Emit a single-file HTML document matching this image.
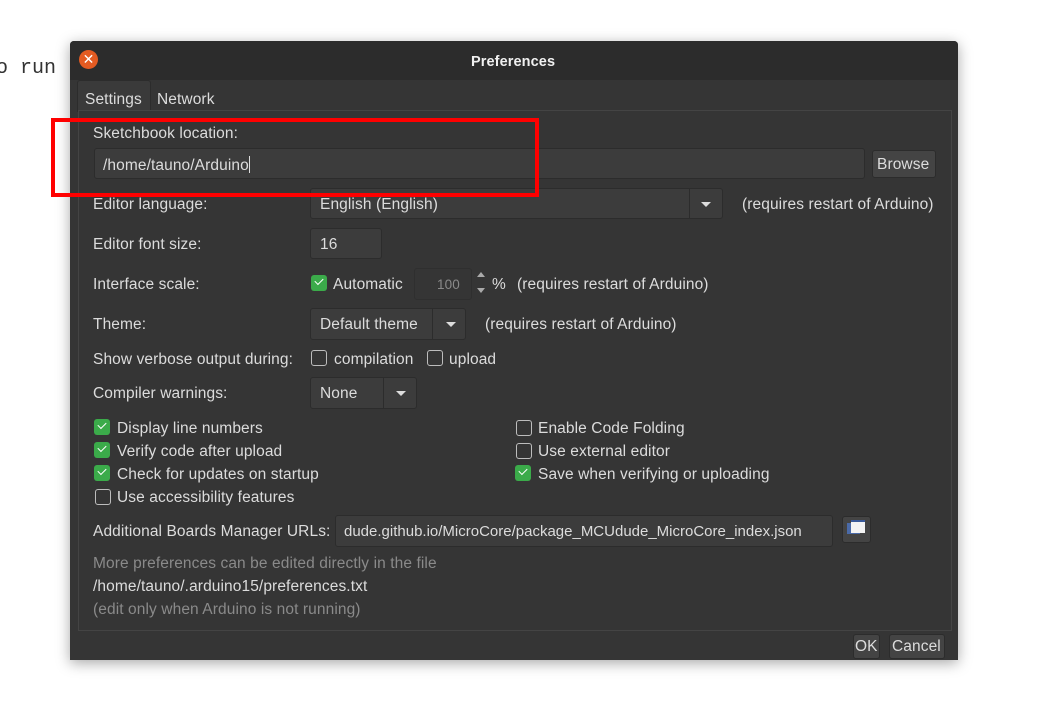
<!DOCTYPE html>
<html><head><style>
body{margin:0;width:1039px;height:714px;background:#fff;position:relative;overflow:hidden;font-family:"Liberation Sans",sans-serif;}
.a{position:absolute;white-space:nowrap;}
.t{position:absolute;white-space:nowrap;font-size:15.5px;color:#dcdcdc;line-height:18px;height:18px;margin-top:2px;letter-spacing:0.1px;}
.dlg{position:absolute;left:70px;top:41px;width:888px;height:619px;background:#353535;box-shadow:0 3px 14px rgba(0,0,0,.35);border-radius:4px 4px 0 0;}
.box{position:absolute;background:#3c3c3c;border:1px solid #2c2c2c;border-radius:3px;}
.cb{position:absolute;width:14px;height:14px;border:1px solid #bdbdbd;border-radius:3px;}
.cbo{position:absolute;width:16px;height:16px;background:#3bab4a;border-radius:3px;}
.cbo:after{content:"";position:absolute;left:4px;top:3px;width:7px;height:4px;border-left:1.6px solid #fff;border-bottom:1.6px solid #fff;transform:rotate(-45deg);}
.arr{position:absolute;width:0;height:0;border-left:5px solid transparent;border-right:5px solid transparent;border-top:5px solid #ddd;}
.dim{color:#8a8a8a;}
</style></head><body>
<div class="a" style="left:-4px;top:57px;font-family:'Liberation Mono',monospace;font-size:20px;color:#333">o  run</div>
<div class="dlg"></div>
<div class="a" style="left:70px;top:41px;width:888px;height:39px;background:#2c2c2c;border-radius:4px 4px 0 0"></div>
<div class="a" style="left:79px;top:50px;width:19px;height:19px;border-radius:50%;background:#e45b22;color:#fff;font-size:14px;line-height:19px;text-align:center">✕</div>
<div class="t" style="left:471px;top:51px;font-weight:bold;color:#f0f0f0;font-size:14.5px">Preferences</div>
<!-- tabs -->
<div class="a" style="left:77px;top:80px;width:72px;height:31px;background:#3a3a3a;border:1px solid #2c2c2c;border-bottom:none;border-radius:3px 3px 0 0"></div>
<div class="t" style="left:85px;top:89px">Settings</div>
<div class="t" style="left:157px;top:89px">Network</div>
<div class="a" style="left:78px;top:110px;width:872px;height:519px;border:1px solid #444;background:#353535"></div>
<div class="t" style="left:93px;top:123px">Sketchbook location:</div>
<div class="box" style="left:94px;top:148px;width:769px;height:29px"></div>
<div class="t" style="left:103px;top:154px">/home/tauno/Arduino<span style="display:inline-block;width:1px;height:17px;background:#ddd;vertical-align:-3px"></span></div>
<div class="box" style="left:872px;top:150px;width:62px;height:26px;background:#444"></div>
<div class="t" style="left:877px;top:154px">Browse</div>

<div class="t" style="left:93px;top:194px">Editor language:</div>
<div class="box" style="left:310px;top:188px;width:411px;height:29px"></div>
<div class="a" style="left:689px;top:189px;width:1px;height:29px;background:#2c2c2c"></div>
<div class="t" style="left:320px;top:194px">English (English)</div>
<div class="arr" style="left:701px;top:202px"></div>
<div class="t" style="left:742px;top:194px">(requires restart of Arduino)</div>

<div class="t" style="left:93px;top:234px">Editor font size:</div>
<div class="box" style="left:310px;top:228px;width:70px;height:29px"></div>
<div class="t" style="left:320px;top:234px">16</div>

<div class="t" style="left:93px;top:274px">Interface scale:</div>
<div class="cbo" style="left:311px;top:275px"></div>
<div class="t" style="left:333px;top:274px">Automatic</div>
<div class="box" style="left:414px;top:268px;width:56px;height:30px;background:#353535;border-color:#2f2f2f"></div>
<div class="t dim" style="left:437px;top:274px;font-size:13.5px">100</div>
<div class="a" style="left:477px;top:272px;width:0;height:0;border-left:4px solid transparent;border-right:4px solid transparent;border-bottom:5px solid #aaa"></div>
<div class="a" style="left:477px;top:288px;width:0;height:0;border-left:4px solid transparent;border-right:4px solid transparent;border-top:5px solid #aaa"></div>
<div class="t" style="left:492px;top:274px">%</div>
<div class="t" style="left:517px;top:274px">(requires restart of Arduino)</div>

<div class="t" style="left:93px;top:314px">Theme:</div>
<div class="box" style="left:310px;top:308px;width:154px;height:30px"></div>
<div class="a" style="left:432px;top:309px;width:1px;height:30px;background:#2c2c2c"></div>
<div class="t" style="left:320px;top:314px">Default theme</div>
<div class="arr" style="left:446px;top:322px"></div>
<div class="t" style="left:485px;top:314px">(requires restart of Arduino)</div>

<div class="t" style="left:93px;top:349px">Show verbose output during:</div>
<div class="cb" style="left:311px;top:350px"></div>
<div class="t" style="left:334px;top:349px">compilation</div>
<div class="cb" style="left:427px;top:350px"></div>
<div class="t" style="left:449px;top:349px">upload</div>

<div class="t" style="left:93px;top:383px">Compiler warnings:</div>
<div class="box" style="left:310px;top:377px;width:105px;height:30px"></div>
<div class="a" style="left:383px;top:378px;width:1px;height:30px;background:#2c2c2c"></div>
<div class="t" style="left:320px;top:383px">None</div>
<div class="arr" style="left:396px;top:391px"></div>

<div class="cbo" style="left:94px;top:419px"></div><div class="t" style="left:117px;top:418px">Display line numbers</div>
<div class="cbo" style="left:94px;top:442px"></div><div class="t" style="left:117px;top:441px">Verify code after upload</div>
<div class="cbo" style="left:94px;top:465px"></div><div class="t" style="left:117px;top:464px">Check for updates on startup</div>
<div class="cb" style="left:95px;top:489px"></div><div class="t" style="left:117px;top:487px">Use accessibility features</div>
<div class="cb" style="left:516px;top:420px"></div><div class="t" style="left:538px;top:418px">Enable Code Folding</div>
<div class="cb" style="left:516px;top:443px"></div><div class="t" style="left:538px;top:441px">Use external editor</div>
<div class="cbo" style="left:515px;top:465px"></div><div class="t" style="left:538px;top:464px">Save when verifying or uploading</div>

<div class="t" style="left:93px;top:521px">Additional Boards Manager URLs:</div>
<div class="box" style="left:335px;top:515px;width:496px;height:30px;overflow:hidden"></div>
<div class="t" style="left:344px;top:521px;font-size:15px;letter-spacing:0">dude.github.io/MicroCore/package_MCUdude_MicroCore_index.json</div>
<div class="box" style="left:842px;top:516px;width:27px;height:25px;background:#444"></div>
<div class="a" style="left:847px;top:523px;width:13px;height:11px;background:#4a6aa8"></div>
<div class="a" style="left:851px;top:520px;width:14px;height:11px;background:#f4f4f4;border-top:2px solid #3a5a9a"></div>

<div class="t dim" style="left:93px;top:553px">More preferences can be edited directly in the file</div>
<div class="t" style="left:93px;top:576px">/home/tauno/.arduino15/preferences.txt</div>
<div class="t dim" style="left:93px;top:599px">(edit only when Arduino is not running)</div>

<div class="box" style="left:853px;top:634px;width:25px;height:23px;background:#444"></div>
<div class="t" style="left:855px;top:636px">OK</div>
<div class="box" style="left:889px;top:634px;width:54px;height:23px;background:#444"></div>
<div class="t" style="left:892px;top:636px">Cancel</div>

<div class="a" style="left:51px;top:118px;width:480px;height:71px;border:4px solid #f00"></div>
</body></html>
